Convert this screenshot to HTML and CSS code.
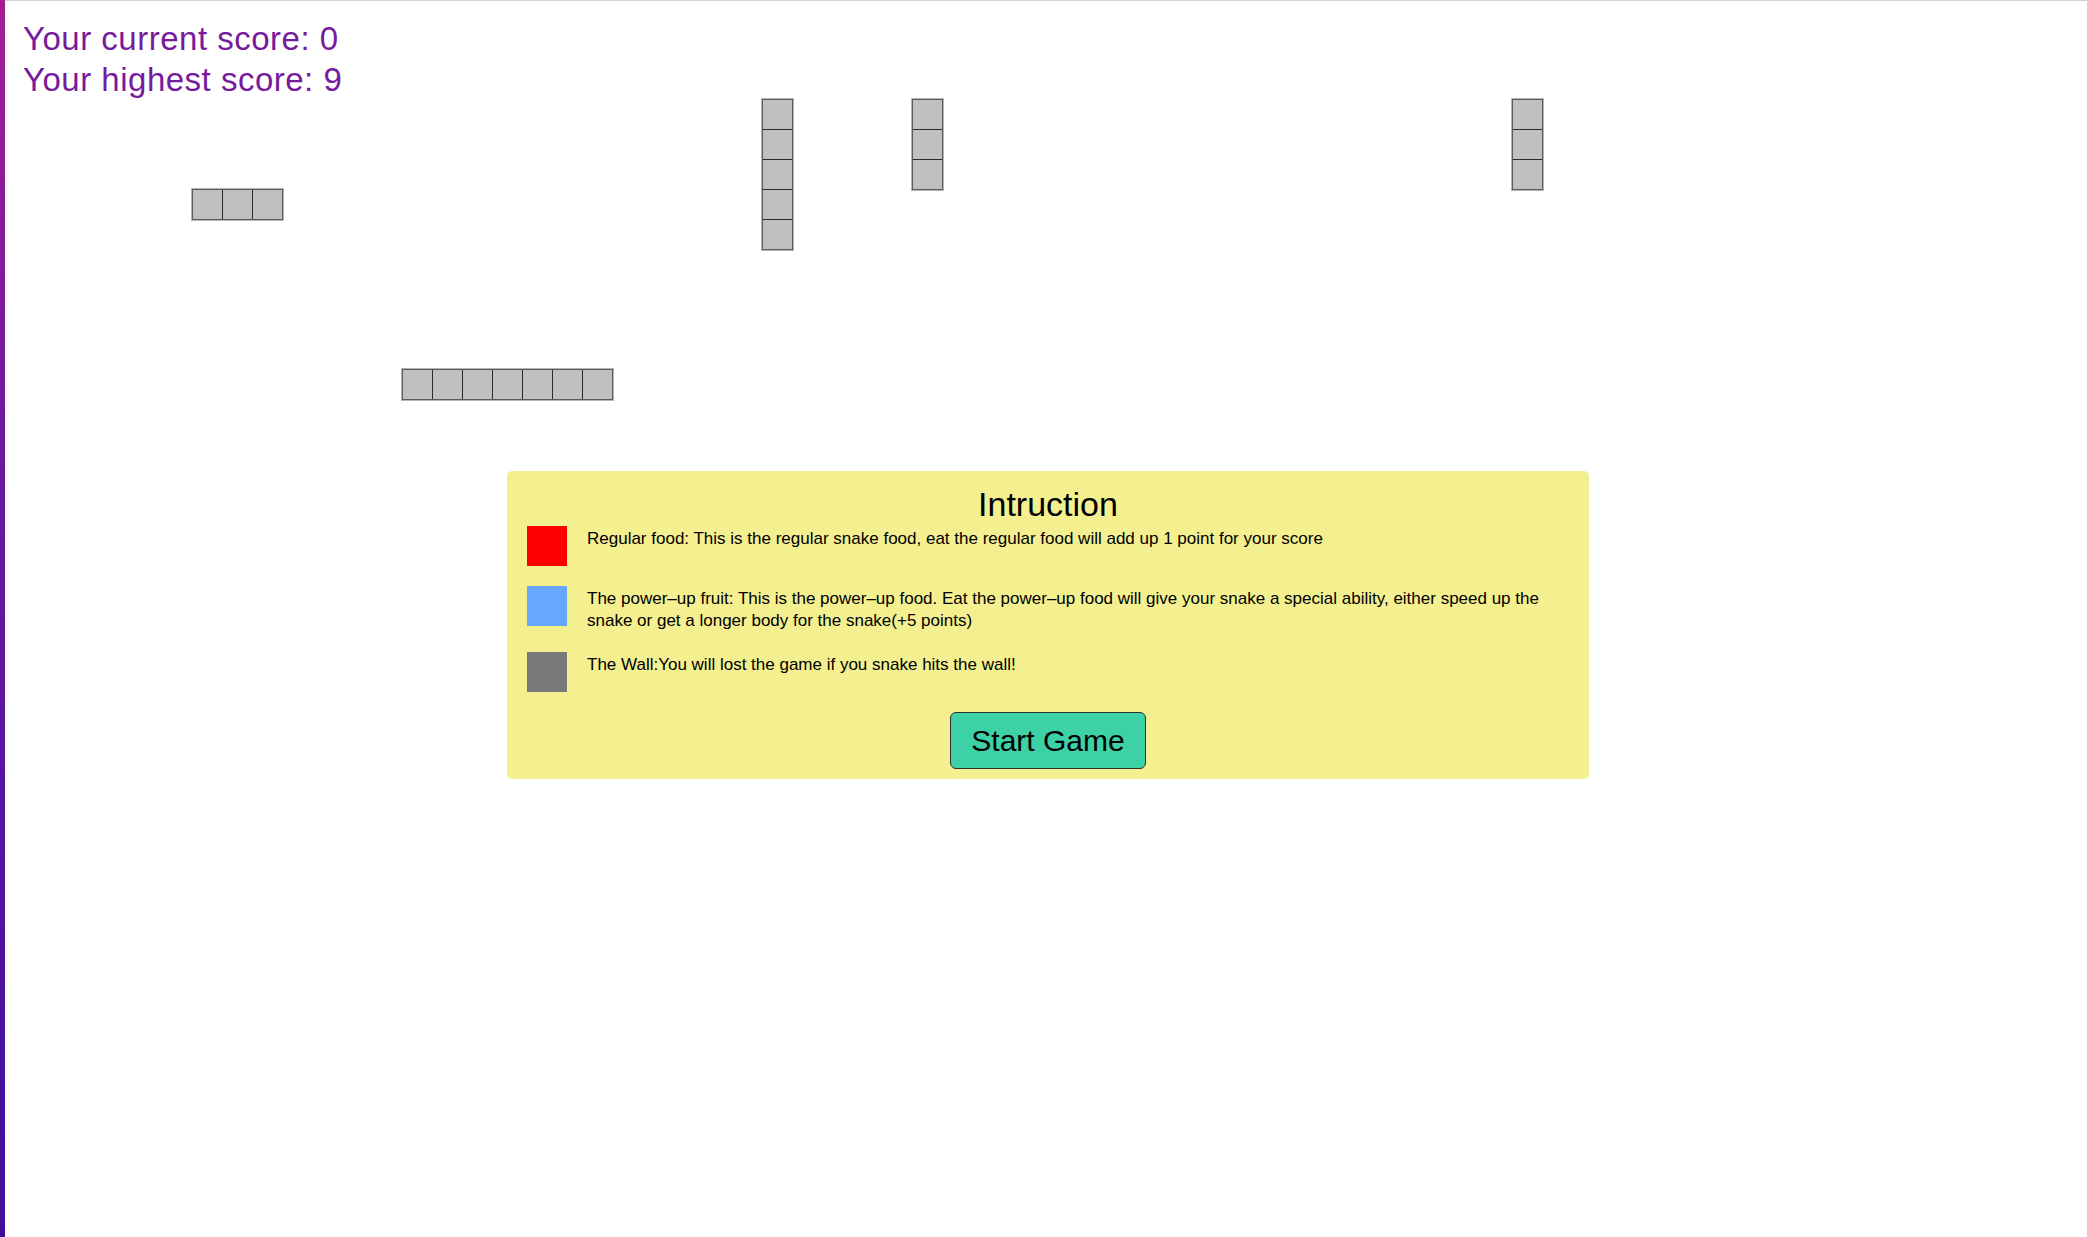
FILE: index.html
```html
<!DOCTYPE html>
<html lang="en">
<head>
<meta charset="utf-8">
<title>Snake</title>
<link rel="stylesheet" href="styles.css">
</head>
<body>
<div class="sidebar"></div>
<div class="field">
  <div class="wall wall-row wall-a"><span class="cell"></span><span class="cell"></span><span class="cell"></span></div>
  <div class="wall wall-col wall-b"><span class="cell"></span><span class="cell"></span><span class="cell"></span><span class="cell"></span><span class="cell"></span></div>
  <div class="wall wall-col wall-c"><span class="cell"></span><span class="cell"></span><span class="cell"></span></div>
  <div class="wall wall-col wall-d"><span class="cell"></span><span class="cell"></span><span class="cell"></span></div>
  <div class="wall wall-row wall-e"><span class="cell"></span><span class="cell"></span><span class="cell"></span><span class="cell"></span><span class="cell"></span><span class="cell"></span><span class="cell"></span></div>
</div>
<main class="page">
  <div class="scores">
    <div class="score">Your current score: 0</div>
    <div class="score">Your highest score: 9</div>
  </div>
  <section class="panel">
    <h2 class="panel-title">Intruction</h2>
    <div class="item">
      <span class="swatch swatch-red"></span>
      <p class="item-text">Regular food: This is the regular snake food, eat the regular food will add up 1 point for your score</p>
    </div>
    <div class="item">
      <span class="swatch swatch-blue"></span>
      <p class="item-text">The power–up fruit: This is the power–up food. Eat the power–up food will give your snake a special ability, either speed up the snake or get a longer body for the snake(+5 points)</p>
    </div>
    <div class="item">
      <span class="swatch swatch-gray"></span>
      <p class="item-text">The Wall:You will lost the game if you snake hits the wall!</p>
    </div>
    <div class="actions">
      <button class="start">Start Game</button>
    </div>
  </section>
</main>
</body>
</html>
```

FILE: styles.css
```css
html, body {
  margin: 0;
  padding: 0;
  background: #ffffff;
}
body {
  position: relative;
  min-height: 1237px;
  font-family: "Liberation Sans", Arial, sans-serif;
  border-top: 1px solid #d2d2d2;
  box-sizing: border-box;
}
.sidebar {
  position: fixed;
  left: 0;
  top: 0;
  bottom: 0;
  width: 5px;
  background: linear-gradient(to bottom, #a31f93 0%, #6d1a9e 35%, #3e109c 100%);
  z-index: 2;
}
.field {
  position: absolute;
  inset: 0;
}
.wall {
  position: absolute;
  display: flex;
  border: 1px solid #5b5b5b;
  background: #2a2a2a;
  gap: 1px;
  box-shadow: 0 0 0 1px rgba(91, 91, 91, 0.45);
}
.wall-row { flex-direction: row; }
.wall-col { flex-direction: column; }
.cell {
  display: block;
  width: 29px;
  height: 29px;
  background: #c0c0c0;
}
.wall-a { left: 192px; top: 188px; }
.wall-b { left: 762px; top: 98px; }
.wall-c { left: 912px; top: 98px; }
.wall-d { left: 1512px; top: 98px; }
.wall-e { left: 402px; top: 368px; }

.page {
  position: relative;
}
.scores {
  padding: 17px 0 0 23px;
}
.score {
  color: #761b9c;
  font-size: 33px;
  letter-spacing: 0.5px;
  line-height: 41px;
}
.panel {
  width: 1082px;
  box-sizing: border-box;
  margin: 371px 0 0 507px;
  padding: 11px 20px 10px 20px;
  background: #f5f08f;
  border-radius: 5px;
}
.panel-title {
  margin: 0;
  text-align: center;
  font-weight: normal;
  font-size: 34px;
  line-height: 44px;
  color: #000;
}
.item {
  display: flex;
  align-items: flex-start;
  gap: 20px;
  margin-bottom: 20px;
}
.swatch {
  flex: 0 0 40px;
  height: 40px;
}
.swatch-red { background: #ff0000; }
.swatch-blue { background: #66a8fd; }
.swatch-gray { background: #7a7a7a; }
.item-text {
  margin: 2px 0 0;
  font-size: 17px;
  line-height: 22px;
  color: #000;
}
.actions {
  display: flex;
  justify-content: center;
  padding-top: 0;
}
.start {
  width: 196px;
  height: 57px;
  font-family: "Liberation Sans", Arial, sans-serif;
  font-size: 30px;
  color: #000;
  background: #3dd1a6;
  border: 1.5px solid #2f2f2f;
  border-radius: 6px;
  padding: 0;
}
```
